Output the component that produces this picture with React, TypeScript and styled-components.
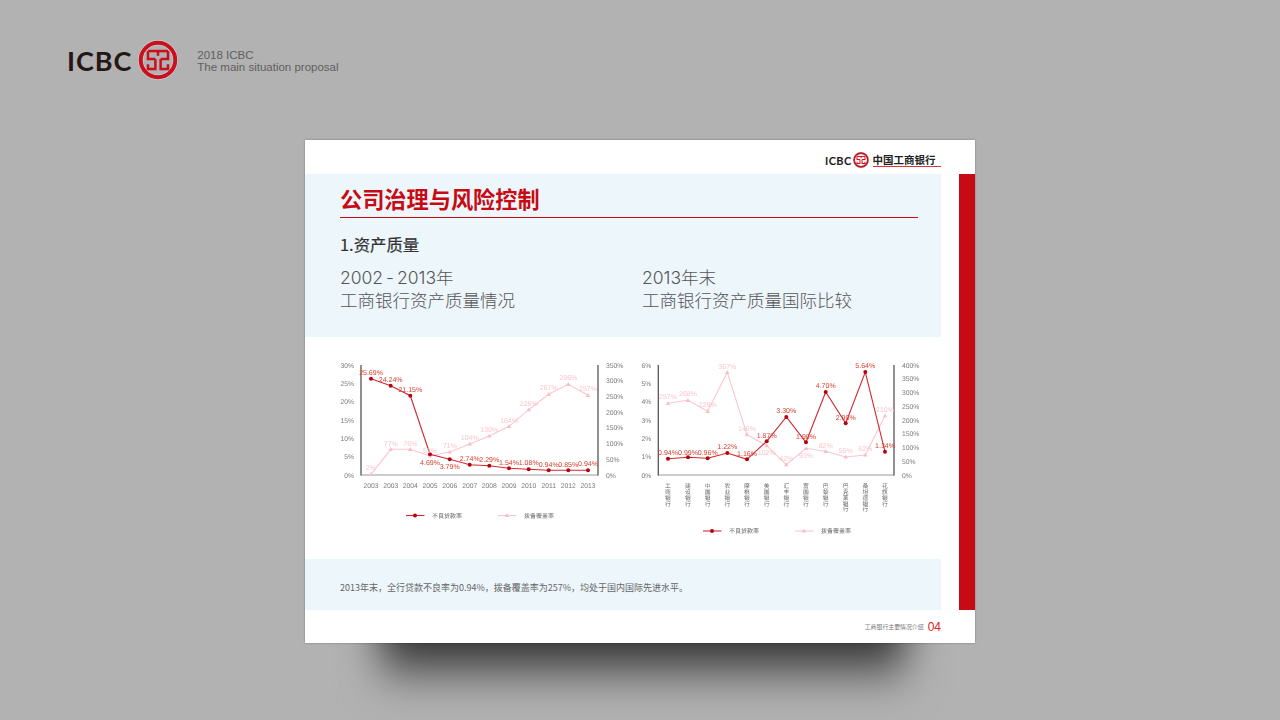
import React from 'react';
import styled, { createGlobalStyle } from 'styled-components';

const RED = '#c80a14';
const CJK = '"Noto Sans CJK SC", "Liberation Sans", sans-serif';

const GlobalStyle = createGlobalStyle`
  html, body {
    margin: 0;
    padding: 0;
    background: #b2b2b2;
  }
`;

const Page = styled.div`
  width: 1280px;
  height: 720px;
  overflow: hidden;
  background: #b2b2b2;
  font-family: ${CJK};
`;

const TopBar = styled.header`
  display: flex;
  align-items: center;
  height: 40px;
  padding: 40px 0 0 67px;
`;

const BrandName = styled.span<{ $size: number }>`
  font-family: Lato, 'Liberation Sans', sans-serif;
  font-weight: 700;
  font-size: ${(p) => p.$size}px;
  letter-spacing: ${(p) => p.$size * 0.035}px;
  line-height: 1;
  color: #231815;
`;

const BrandRow = styled.div<{ $gap: number }>`
  display: flex;
  align-items: center;
  gap: ${(p) => p.$gap}px;
`;

const TopCaption = styled.div`
  margin: 2px 0 0 19px;
  font-family: 'Liberation Sans', sans-serif;
  font-size: 11.5px;
  line-height: 12px;
  color: #606060;
`;

const SlideArea = styled.main`
  position: relative;
  width: 670px;
  height: 503px;
  margin: 60px 0 0 305px;
`;

const Shadow = styled.div`
  position: absolute;
  left: 76px;
  right: 70px;
  top: 430px;
  height: 122px;
  background: linear-gradient(#2c2c2c 58%, #5c5c5c 74%, #8c8c8c 88%, #b2b2b2 100%);
  filter: blur(20px);
`;

const Slide = styled.div`
  position: relative;
  display: grid;
  grid-template-columns: 636px 18px 16px;
  grid-template-rows: 34px 1fr 33px;
  height: 100%;
  background: #fff;
  box-shadow: 0 0 2px rgba(0, 0, 0, 0.35);
`;

const SlideHeader = styled.div`
  grid-column: 1 / -1;
  display: flex;
  align-items: center;
  padding: 6px 0 0 520px;
`;

const BankName = styled.div`
  margin-left: 4px;
  width: 68px;
  border-bottom: 1px solid #e0303a;
  font-weight: 700;
  font-size: 10.5px;
  line-height: 13px;
  color: #222;
  white-space: nowrap;
`;

const Body = styled.div`
  grid-column: 1;
  display: flex;
  flex-direction: column;
`;

const RedBar = styled.div`
  grid-column: 3;
  grid-row: 2;
  background: ${RED};
`;

const HeroBand = styled.section`
  height: 163px;
  box-sizing: border-box;
  padding: 9px 23px 0 35px;
  background: #edf6fb;
`;

const Title = styled.h1`
  margin: 0;
  padding-bottom: 3px;
  border-bottom: 1px solid ${RED};
  font-size: 22.2px;
  font-weight: 700;
  line-height: 31px;
  color: ${RED};
`;

const SectionTitle = styled.h2`
  margin: 14px 0 0;
  font-size: 16.4px;
  font-weight: 400;
  -webkit-text-stroke: 0.2px #333;
  line-height: 24px;
  color: #333;
`;

const Columns = styled.div`
  display: grid;
  grid-template-columns: 302px 1fr;
  margin-top: 10px;
`;

const ColumnTitle = styled.div`
  font-family: Inter, ${CJK};
  font-size: 17.5px;
  font-weight: 300;
  line-height: 23px;
  color: #555;
`;

const RangeDash = styled.span`
  margin: 0 3px;
`;

const ChartRow = styled.section`
  display: flex;
  height: 222px;
  box-sizing: border-box;
  padding: 18px 0 0 30px;
`;

const ChartSvg = styled.svg`
  display: block;
  flex: none;
  filter: blur(0.3px);
  text-rendering: geometricPrecision;
`;

const AxisText = styled.text`
  font-family: 'Liberation Sans', sans-serif;
  font-size: 6.8px;
  fill: #7c7c7c;
`;

const ValueText = styled.text<{ $soft?: boolean }>`
  font-family: 'Liberation Sans', sans-serif;
  font-size: 7px;
  fill: ${(p) => (p.$soft ? '#f9c6ce' : '#d8402f')};
`;

const LegendText = styled.text`
  font-family: ${CJK};
  font-size: 6px;
  fill: #666;
`;

const VerticalLabel = styled.text`
  font-family: ${CJK};
  font-size: 5.8px;
  fill: #666;
  writing-mode: vertical-rl;
`;

const SummaryBand = styled.section`
  display: flex;
  align-items: center;
  height: 51px;
  box-sizing: border-box;
  padding: 6px 0 0 35px;
  background: #edf6fb;
  font-size: 9px;
  color: #666;
`;

const Footer = styled.footer`
  grid-column: 1;
  grid-row: 3;
  display: flex;
  align-items: center;
  justify-content: flex-end;
  gap: 4px;
  font-size: 5.9px;
  color: #777;
`;

const PageNumber = styled.span`
  font-family: 'Liberation Sans', sans-serif;
  font-size: 12px;
  color: #dd2222;
`;

const Emblem = ({ size }: { size: number }) => (
  <svg width={size} height={size} viewBox="-19 -19 38 38">
    <circle cx="0" cy="0" r="16.4" fill="none" stroke="#c2d6d8" strokeWidth="5" />
    <circle cx="0" cy="0" r="16.4" fill="none" stroke="#cc0f1c" strokeWidth="3.8" />
    <g fill="none" stroke="#cc0f1c" strokeWidth="2.4">
      <path d="M-9.5 -8.5H9.5" />
      <path d="M-2.5 -1H-9.5V-8.5" />
      <path d="M2.5 -1H9.5V-8.5" />
      <path d="M0 -8.5V-4" />
      <path d="M-2.5 -1V8.5H-9.5V4" />
      <path d="M2.5 -1V8.5H9.5V4" />
    </g>
  </svg>
);

interface Point {
  x: number;
  y: number;
  label: string;
  ly: number;
}

interface Series {
  hard: Point[];
  soft: Point[];
}

const zip = (xs: number[], ys: number[], labels: string[], lys: number[]): Point[] =>
  xs.map((x, i) => ({ x, y: ys[i], label: labels[i], ly: lys[i] }));

const xsLeft = [371, 390.7, 410.3, 430, 449.7, 469.7, 489.3, 509, 528.7, 548.7, 568.3, 588];
const xsRight = [668, 688, 707.7, 727.3, 747, 766.7, 786.3, 806, 825.7, 845.7, 865.3, 885];

const leftSeries: Series = {
  hard: zip(
    xsLeft,
    [378.7, 385.7, 395.7, 454.3, 459.3, 464.7, 465.7, 468.3, 469.3, 470.3, 470.3, 470.3],
    ['25.69%', '24.24%', '21.15%', '4.69%', '3.79%', '2.74%', '2.29%', '1.54%', '1.08%', '0.94%', '0.85%', '0.94%'],
    [372.3, 379, 389.7, 462.7, 466.7, 458.7, 459.7, 462, 462.7, 464, 464, 463.7],
  ),
  soft: zip(
    xsLeft,
    [474.3, 449.3, 449.3, 456, 452, 444, 436, 426.3, 409.7, 394.3, 384.3, 395.3],
    ['2%', '77%', '76%', '51%', '71%', '104%', '130%', '164%', '228%', '267%', '296%', '257%'],
    [467.3, 443.3, 443.3, 450, 445, 437.3, 429.3, 420, 403.3, 387.7, 377.7, 388.3],
  ),
};

const rightSeries: Series = {
  hard: zip(
    xsRight,
    [458.7, 457.3, 458.3, 453, 459.3, 441.3, 417, 442.3, 392, 423.3, 372, 451.7],
    ['0.94%', '0.99%', '0.96%', '1.22%', '1.16%', '1.87%', '3.30%', '1.90%', '4.70%', '2.90%', '5.64%', '1.34%'],
    [452.3, 452, 452, 446.7, 453, 435, 410.3, 436, 385.7, 417, 365.3, 445.7],
  ),
  soft: zip(
    xsRight,
    [403.3, 400.3, 411.3, 372.3, 434.7, 445.7, 464.7, 448.3, 451.3, 457, 455, 415.7],
    ['257%', '268%', '229%', '367%', '146%', '102%', '42%', '93%', '82%', '55%', '62%', '210%'],
    [396.3, 393.7, 404.7, 366.3, 428.3, 452, 458.3, 455.3, 445, 450.7, 448.7, 409.3],
  ),
};

const line = (pts: Point[]) => pts.map((p) => `${p.x},${p.y}`).join(' ');

const Dot = ({ x, y }: { x: number; y: number }) => (
  <circle cx={x} cy={y} r="2" fill="#b8000e" />
);

const Triangle = ({ x, y }: { x: number; y: number }) => (
  <polygon points={`${x},${y - 2.2} ${x + 2.2},${y + 1.6} ${x - 2.2},${y + 1.6}`} fill="#fabcc6" />
);

const Legend = ({ y, hardX, softX }: { y: number; hardX: number; softX: number }) => (
  <g>
    <line x1={hardX} x2={hardX + 18.5} y1={y} y2={y} stroke="#cf2a30" strokeWidth="1.1" />
    <Dot x={hardX + 9} y={y} />
    <LegendText x={hardX + 26} y={y + 2.2}>不良贷款率</LegendText>
    <line x1={softX} x2={softX + 18.5} y1={y} y2={y} stroke="#fbc7cf" strokeWidth="1.1" />
    <Triangle x={softX + 9} y={y} />
    <LegendText x={softX + 26} y={y + 2.2}>拨备覆盖率</LegendText>
  </g>
);

interface ChartProps {
  originX: number;
  width: number;
  height: number;
  axisLeft: number;
  axisRight: number;
  leftTicks: string[];
  rightTicks: string[];
  series: Series;
  children: React.ReactNode;
}

// coordinates are page pixels, viewBox maps them into the svg
const LineChart = ({ originX, width, height, axisLeft, axisRight, leftTicks, rightTicks, series, children }: ChartProps) => {
  const tickY = (i: number, n: number) => 365 + (110 * i) / (n - 1);
  return (
    <ChartSvg width={width} height={height} viewBox={`${originX} 355 ${width} ${height}`}>
      <line x1={axisLeft} x2={axisRight} y1="475" y2="475" stroke="#999" strokeWidth="1" />
      <line x1={axisLeft} x2={axisLeft} y1="365" y2="475.5" stroke="#555" strokeWidth="1.3" />
      <line x1={axisRight} x2={axisRight} y1="365" y2="475.5" stroke="#555" strokeWidth="1.3" />
      {leftTicks.map((t, i) => (
        <AxisText key={t} x={axisLeft - 7} y={tickY(i, leftTicks.length) + 2.5} textAnchor="end">{t}</AxisText>
      ))}
      {rightTicks.map((t, i) => (
        <AxisText key={t} x={axisRight + 8} y={tickY(i, rightTicks.length) + 2.5}>{t}</AxisText>
      ))}
      <polyline points={line(series.soft)} fill="none" stroke="#fbc7cf" strokeWidth="1.1" />
      {series.soft.map((p) => <Triangle key={p.x} x={p.x} y={p.y} />)}
      <polyline points={line(series.hard)} fill="none" stroke="#cf2a30" strokeWidth="1.1" />
      {series.hard.map((p) => <Dot key={p.x} x={p.x} y={p.y} />)}
      {series.soft.map((p) => (
        <ValueText key={p.x} $soft x={p.x} y={p.ly + 2.5} textAnchor="middle">{p.label}</ValueText>
      ))}
      {series.hard.map((p) => (
        <ValueText key={p.x} x={p.x} y={p.ly + 2.5} textAnchor="middle">{p.label}</ValueText>
      ))}
      {children}
    </ChartSvg>
  );
};

const years = ['2003', '2003', '2004', '2005', '2006', '2007', '2008', '2009', '2010', '2011', '2012', '2013'];
const banks = ['工商银行', '建设银行', '中国银行', '农业银行', '摩根银行', '美国银行', '汇丰银行', '富国银行', '巴黎银行', '巴克莱银行', '桑坦德银行', '花旗银行'];

export default function App() {
  return (
    <Page>
      <GlobalStyle />
      <TopBar>
        <BrandRow $gap={6}>
          <BrandName $size={27}>ICBC</BrandName>
          <Emblem size={40} />
        </BrandRow>
        <TopCaption>
          2018 ICBC
          <br />
          The main situation proposal
        </TopCaption>
      </TopBar>
      <SlideArea>
        <Shadow />
        <Slide>
          <SlideHeader>
            <BrandRow $gap={1}>
              <BrandName $size={11}>ICBC</BrandName>
              <Emblem size={16} />
            </BrandRow>
            <BankName>中国工商银行</BankName>
          </SlideHeader>
          <Body>
            <HeroBand>
              <Title>公司治理与风险控制</Title>
              <SectionTitle>1.资产质量</SectionTitle>
              <Columns>
                <ColumnTitle>
                  2002<RangeDash>-</RangeDash>2013年
                  <br />
                  工商银行资产质量情况
                </ColumnTitle>
                <ColumnTitle>
                  2013年末
                  <br />
                  工商银行资产质量国际比较
                </ColumnTitle>
              </Columns>
            </HeroBand>
            <ChartRow>
              <LineChart
                originX={335}
                width={300}
                height={190}
                axisLeft={361}
                axisRight={598}
                leftTicks={['30%', '25%', '20%', '15%', '10%', '5%', '0%']}
                rightTicks={['350%', '300%', '250%', '200%', '150%', '100%', '50%', '0%']}
                series={leftSeries}
              >
                {years.map((y, i) => (
                  <AxisText key={xsLeft[i]} x={xsLeft[i]} y={487.5} textAnchor="middle">{y}</AxisText>
                ))}
                <Legend y={515.5} hardX={406} softX={498} />
              </LineChart>
              <LineChart
                originX={635}
                width={300}
                height={190}
                axisLeft={658.3}
                axisRight={894}
                leftTicks={['6%', '5%', '4%', '3%', '2%', '1%', '0%']}
                rightTicks={['400%', '350%', '300%', '250%', '200%', '150%', '100%', '50%', '0%']}
                series={rightSeries}
              >
                {banks.map((b, i) => (
                  <VerticalLabel key={b} x={xsRight[i]} y={483}>{b}</VerticalLabel>
                ))}
                <Legend y={531} hardX={703} softX={795} />
              </LineChart>
            </ChartRow>
            <SummaryBand>2013年末，全行贷款不良率为0.94%，拨备覆盖率为257%，均处于国内国际先进水平。</SummaryBand>
          </Body>
          <RedBar />
          <Footer>
            工商银行主要情况介绍
            <PageNumber>04</PageNumber>
          </Footer>
        </Slide>
      </SlideArea>
    </Page>
  );
}
